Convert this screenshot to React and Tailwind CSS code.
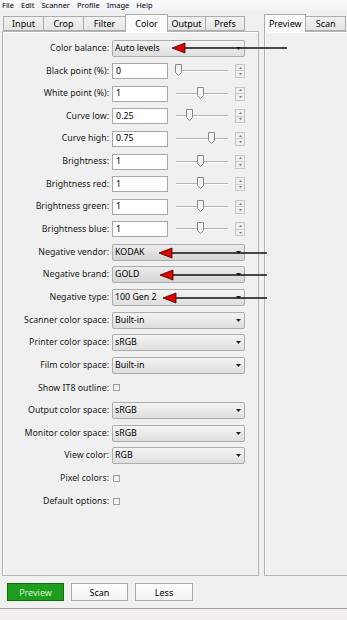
import React from "react";

const FONT = { fontFamily: '"Noto Sans", "Open Sans", sans-serif' };

// slider thumb offset in px from track start (track ~52px wide)
const ROWS = [
  { label: "Color balance:", type: "select", value: "Auto levels" },
  { label: "Black point (%):", type: "num", value: "0", thumb: 0 },
  { label: "White point (%):", type: "num", value: "1", thumb: 22 },
  { label: "Curve low:", type: "num", value: "0.25", thumb: 11 },
  { label: "Curve high:", type: "num", value: "0.75", thumb: 33 },
  { label: "Brightness:", type: "num", value: "1", thumb: 22 },
  { label: "Brightness red:", type: "num", value: "1", thumb: 22 },
  { label: "Brightness green:", type: "num", value: "1", thumb: 22 },
  { label: "Brightness blue:", type: "num", value: "1", thumb: 22 },
  { label: "Negative vendor:", type: "select", value: "KODAK", dark: true },
  { label: "Negative brand:", type: "select", value: "GOLD", dark: true },
  { label: "Negative type:", type: "select", value: "100 Gen 2" },
  { label: "Scanner color space:", type: "select", value: "Built-in" },
  { label: "Printer color space:", type: "select", value: "sRGB" },
  { label: "Film color space:", type: "select", value: "Built-in" },
  { label: "Show IT8 outline:", type: "check" },
  { label: "Output color space:", type: "select", value: "sRGB" },
  { label: "Monitor color space:", type: "select", value: "sRGB" },
  { label: "View color:", type: "select", value: "RGB" },
  { label: "Pixel colors:", type: "check" },
  { label: "Default options:", type: "check" },
];

function Select({ value, dark }) {
  return (
    <div
      className={`relative flex items-center w-[133px] h-[17px] border border-[#acacac] rounded-[2px] pl-[2px] ${
        dark
          ? "bg-gradient-to-b from-[#ececec] to-[#d4d4d4]"
          : "bg-gradient-to-b from-[#f4f4f4] to-[#dedede]"
      }`}
    >
      <span className="text-[8.8px] text-black leading-none">{value}</span>
      <svg className="absolute right-[3px] top-[6px]" width="5" height="3" viewBox="0 0 5 3">
        <path d="M0 0 L5 0 L2.5 3 Z" fill="#222" />
      </svg>
    </div>
  );
}

function Slider({ thumb }) {
  return (
    <div className="relative w-[60px] h-[16px] ml-[2px]">
      <div className="absolute left-[6px] right-[2px] top-[7px] h-[2px] border-t border-[#b4b4b4] border-b border-b-white" />
      <svg className="absolute top-[1px]" style={{ left: 5 + thumb }} width="7" height="12" viewBox="0 0 7 12">
        <path d="M0.5 0.5 H6.5 V8.5 L3.5 11.5 L0.5 8.5 Z" fill="#f4f4f4" stroke="#8a8a8a" />
      </svg>
    </div>
  );
}

function Spinner() {
  return (
    <div className="flex flex-col w-[10px] h-[14px] ml-[5px] border border-[#c8c8c8] bg-[#eeeeee]">
      <div className="flex-1 flex items-center justify-center border-b border-[#d0d0d0]">
        <svg width="3" height="2" viewBox="0 0 3 2"><path d="M0 2 L3 2 L1.5 0 Z" fill="#777" /></svg>
      </div>
      <div className="flex-1 flex items-center justify-center">
        <svg width="3" height="2" viewBox="0 0 3 2"><path d="M0 0 L3 0 L1.5 2 Z" fill="#777" /></svg>
      </div>
    </div>
  );
}

function Row({ row }) {
  return (
    <div className="flex items-center h-[22.65px]">
      <div className="w-[107px] text-right text-[8.8px] text-[#1a1a1a] leading-none pr-[1px]">{row.label}</div>
      <div className="flex items-center ml-[2px]">
        {row.type === "select" && <Select value={row.value} dark={row.dark} />}
        {row.type === "num" && (
          <>
            <div className="w-[56px] h-[16px] border border-[#a8a8a8] bg-white flex items-center pl-[3px] text-[8.8px] leading-none">
              {row.value}
            </div>
            <Slider thumb={row.thumb} />
            <Spinner />
          </>
        )}
        {row.type === "check" && (
          <div className="ml-[1px] w-[7px] h-[7px] border border-[#a0a0a0] bg-gradient-to-b from-[#e8e8e8] to-[#fafafa]" />
        )}
      </div>
    </div>
  );
}

function Tab({ label, w, active }) {
  return (
    <div
      className={`flex items-center justify-center text-[9px] leading-none border border-[#acacac] -mr-px ${
        active
          ? "h-[18px] bg-[#fbfbfb] border-b-0 relative z-10 mb-[-1px] pb-[1px]"
          : "h-[15px] bg-gradient-to-b from-[#f2f2f2] to-[#e4e4e4]"
      }`}
      style={{ width: w }}
    >
      {label}
    </div>
  );
}

function Arrow({ y, tip, end }) {
  return (
    <svg className="absolute left-0 top-0 pointer-events-none" width="347" height="620">
      <line x1={tip + 8} y1={y} x2={end} y2={y} stroke="#111" strokeWidth="1.5" />
      <path d={`M${tip} ${y} L${tip + 13} ${y - 5} L${tip + 13} ${y + 5} Z`} fill="#e00000" stroke="#3a0000" strokeWidth="0.8" />
    </svg>
  );
}

export default function App() {
  return (
    <div className="relative w-[347px] h-[620px] bg-[#f0f0f0] overflow-hidden text-black" style={FONT}>
      {/* Menu */}
      <div className="flex items-center h-[11px] pl-[2px] gap-[7px] text-[7.5px] leading-none bg-gradient-to-b from-[#fbfcfe] to-[#eef1f6]">
        {["File", "Edit", "Scanner", "Profile", "Image", "Help"].map((m) => (
          <span key={m}>{m}</span>
        ))}
      </div>

      <div className="flex mt-[3px]">
        {/* Left side */}
        <div className="ml-[2px] w-[258px] flex flex-col">
          <div className="flex items-end h-[17px] pl-[1px]">
            <Tab label="Input" w={41} />
            <Tab label="Crop" w={41} />
            <Tab label="Filter" w={43} />
            <Tab label="Color" w={43} active />
            <Tab label="Output" w={39} />
            <Tab label="Prefs" w={40} />
          </div>
          <div className="h-[545px] border border-[#b4b4b4] shadow-[inset_1px_1px_0_#fff] pt-[5px]">
            {ROWS.map((r) => (
              <Row key={r.label} row={r} />
            ))}
          </div>
        </div>

        {/* Right side */}
        <div className="ml-[5px] w-[83px] flex flex-col">
          <div className="flex items-end h-[17px]">
            <Tab label="Preview" w={42} active />
            <Tab label="Scan" w={41} />
          </div>
          <div className="h-[545px] border border-[#b4b4b4] border-r-0 shadow-[inset_1px_1px_0_#fff]" />
        </div>
      </div>

      {/* Buttons */}
      <div className="flex gap-[7px] pl-[7px] mt-[7px]">
        <div className="w-[57px] h-[18px] flex items-center justify-center border border-[#0d6e0d] bg-[#1d9d1d] text-[#d4f5d4] text-[9px] leading-none">
          Preview
        </div>
        <div className="w-[57px] h-[18px] flex items-center justify-center border border-[#a8a8a8] bg-gradient-to-b from-[#ffffff] to-[#f2f2f2] text-[9px] leading-none">
          Scan
        </div>
        <div className="w-[58px] h-[18px] flex items-center justify-center border border-[#a8a8a8] bg-gradient-to-b from-[#ffffff] to-[#f2f2f2] text-[9px] leading-none">
          Less
        </div>
      </div>

      {/* Status strip */}
      <div className="absolute left-0 right-0 bottom-0 h-[12px] border-t border-[#a0a0a0] bg-[#f3eeee]" />

      {/* Annotation arrows */}
      <Arrow y={48} tip={172} end={287} />
      <Arrow y={253} tip={159} end={267} />
      <Arrow y={275} tip={160} end={267} />
      <Arrow y={298} tip={163} end={267} />
    </div>
  );
}
